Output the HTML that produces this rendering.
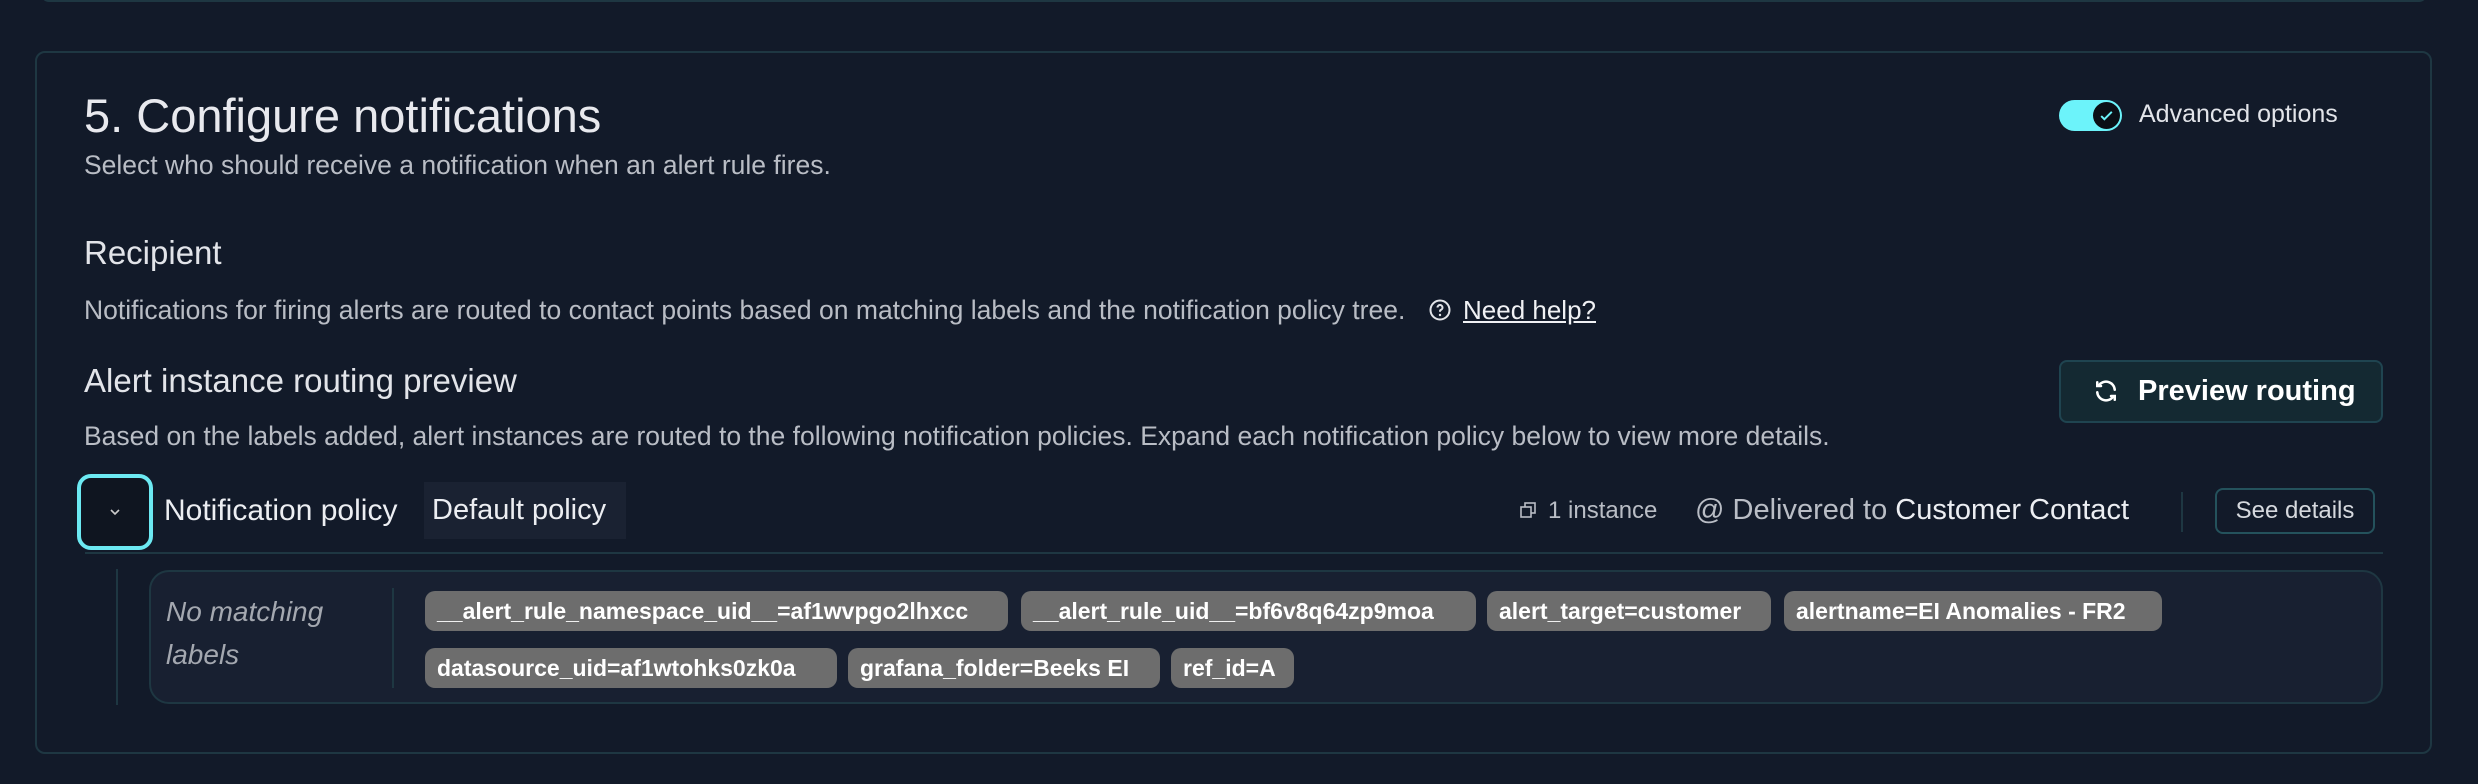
<!DOCTYPE html>
<html><head><meta charset="utf-8"><style>
*{box-sizing:border-box;margin:0;padding:0}
body{width:2478px;height:784px;background:#121a29;font-family:"Liberation Sans",sans-serif;color:#e2e4e9;position:relative;overflow:hidden}
.a{position:absolute;white-space:nowrap}
.sec{color:#b9bdc5}
.chip{position:absolute;height:40px;background:#6d6d6d;border-radius:10px;color:#fff;font-size:23px;font-weight:bold;line-height:40px;padding-left:12px;overflow:hidden;white-space:nowrap}
</style></head><body>
<div class="a" style="left:41px;top:-20px;width:2386px;height:22px;border:2px solid #1e3742;border-radius:8px"></div>
<div class="a" style="left:35px;top:51px;width:2397px;height:703px;border:2px solid #1e3742;border-radius:10px;background:#121a29"></div>

<div class="a" style="left:84px;top:88px;font-size:47px;color:#e8e9ee">5. Configure notifications</div>
<div class="a sec" style="left:84px;top:150px;font-size:26.5px">Select who should receive a notification when an alert rule fires.</div>

<div class="a" style="left:2059px;top:100px;width:63px;height:31px;border-radius:16px;background:#6cf3fa"></div>
<div class="a" style="left:2093px;top:102px;width:27px;height:27px;border-radius:50%;background:#0b0f16"></div>
<svg class="a" style="left:2098px;top:107px" width="17" height="17" viewBox="0 0 16 16"><path d="M3 8.5l3 3 7-7" stroke="#6cf3fa" stroke-width="1.8" fill="none"/></svg>
<div class="a" style="left:2139px;top:100px;font-size:25px;color:#e2e4e9">Advanced options</div>

<div class="a" style="left:84px;top:234px;font-size:33px">Recipient</div>
<div class="a sec" style="left:84px;top:295px;font-size:26.5px">Notifications for firing alerts are routed to contact points based on matching labels and the notification policy tree.</div>
<svg class="a" style="left:1428px;top:298px" width="24" height="24" viewBox="0 0 24 24"><circle cx="12" cy="12" r="9.5" stroke="#e2e4e9" stroke-width="2" fill="none"/><path d="M9.5 9.5a2.5 2.5 0 1 1 3.5 2.3c-.7.3-1 .8-1 1.5v.5" stroke="#e2e4e9" stroke-width="2" fill="none"/><circle cx="12" cy="17" r="1.2" fill="#e2e4e9"/></svg>
<div class="a" style="left:1463px;top:295px;font-size:26px;text-decoration:underline;color:#f0f1f4">Need help?</div>

<div class="a" style="left:84px;top:362px;font-size:33px">Alert instance routing preview</div>
<div class="a sec" style="left:84px;top:421px;font-size:26.5px">Based on the labels added, alert instances are routed to the following notification policies. Expand each notification policy below to view more details.</div>

<div class="a" style="left:2059px;top:360px;width:324px;height:63px;background:#142932;border:2px solid #1f4450;border-radius:8px"></div>
<svg class="a" style="left:2091px;top:376px" width="30" height="30" viewBox="0 0 24 24"><path d="M19 11a7 7 0 0 0-12.5-3.8M5 5v3h3M5 13a7 7 0 0 0 12.5 3.8M19 19v-3h-3" stroke="#fff" stroke-width="2" fill="none" stroke-linecap="round"/></svg>
<div class="a" style="left:2138px;top:375px;font-size:29px;font-weight:bold;color:#fff">Preview routing</div>

<div class="a" style="left:77px;top:474px;width:76px;height:76px;border:4px solid #6ce9f2;border-radius:14px;background:#0f1520"></div>
<svg class="a" style="left:108px;top:506px" width="14" height="12" viewBox="0 0 14 12"><path d="M3 4l4 4 4-4" stroke="#ccc" stroke-width="1.6" fill="none"/></svg>
<div class="a" style="left:164px;top:494px;font-size:30px;color:#eceef2">Notification policy</div>
<div class="a" style="left:424px;top:482px;width:202px;height:57px;background:#1a2232"></div>
<div class="a" style="left:432px;top:494px;font-size:29px;color:#eceef2">Default policy</div>

<svg class="a" style="left:1518px;top:500px" width="20" height="20" viewBox="0 0 20 20"><rect x="7" y="3" width="10" height="10" stroke="#b9bdc5" stroke-width="1.6" fill="none"/><rect x="3" y="7" width="10" height="10" stroke="#b9bdc5" stroke-width="1.6" fill="#121a29"/></svg>
<div class="a sec" style="left:1548px;top:497px;font-size:24px">1 instance</div>
<div class="a" style="left:1695px;top:494px;font-size:29px"><span class="sec">@ Delivered to </span><span style="color:#eceef2">Customer Contact</span></div>
<div class="a" style="left:2181px;top:492px;width:2px;height:40px;background:#1e3742"></div>
<div class="a" style="left:2215px;top:488px;width:160px;height:46px;border:2px solid #24525c;border-radius:8px;font-size:24px;line-height:42px;text-align:center;color:#d6d9de">See details</div>
<div class="a" style="left:85px;top:552px;width:2298px;height:2px;background:#1e3742"></div>

<div class="a" style="left:116px;top:569px;width:2px;height:136px;background:#1e3742"></div>
<div class="a" style="left:149px;top:570px;width:2234px;height:134px;background:#182031;border:2px solid #1e3742;border-radius:20px"></div>
<div class="a" style="left:166px;top:590px;font-size:28px;font-style:italic;color:#a4a8b0;line-height:43px;white-space:normal;width:200px">No matching labels</div>
<div class="a" style="left:392px;top:588px;width:2px;height:100px;background:#1e3742"></div>

<div class="chip" style="left:425px;top:591px;width:583px">__alert_rule_namespace_uid__=af1wvpgo2lhxcc</div>
<div class="chip" style="left:1021px;top:591px;width:455px">__alert_rule_uid__=bf6v8q64zp9moa</div>
<div class="chip" style="left:1487px;top:591px;width:284px">alert_target=customer</div>
<div class="chip" style="left:1784px;top:591px;width:378px">alertname=EI Anomalies - FR2</div>
<div class="chip" style="left:425px;top:648px;width:412px">datasource_uid=af1wtohks0zk0a</div>
<div class="chip" style="left:848px;top:648px;width:312px">grafana_folder=Beeks EI</div>
<div class="chip" style="left:1171px;top:648px;width:123px">ref_id=A</div>
</body></html>
